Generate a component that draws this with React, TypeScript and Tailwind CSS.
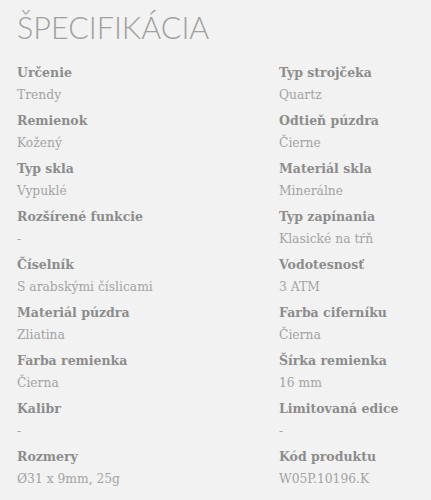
import React from "react";

const left: [string, string][] = [
  ["Určenie", "Trendy"],
  ["Remienok", "Kožený"],
  ["Typ skla", "Vypuklé"],
  ["Rozšírené funkcie", "-"],
  ["Číselník", "S arabskými číslicami"],
  ["Materiál púzdra", "Zliatina"],
  ["Farba remienka", "Čierna"],
  ["Kalibr", "-"],
  ["Rozmery", "Ø31 x 9mm, 25g"],
];
const right: [string, string][] = [
  ["Typ strojčeka", "Quartz"],
  ["Odtieň púzdra", "Čierne"],
  ["Materiál skla", "Minerálne"],
  ["Typ zapínania", "Klasické na tŕň"],
  ["Vodotesnosť", "3 ATM"],
  ["Farba ciferníku", "Čierna"],
  ["Šírka remienka", "16 mm"],
  ["Limitovaná edice", "-"],
  ["Kód produktu", "W05P.10196.K"],
];

function Item({ k, v }: { k: string; v: string }) {
  return (
    <div className="h-[48px] pt-[1px]">
      <div className="text-[12.5px] font-bold leading-[20px] text-[#8c8c8c]">{k}</div>
      <div className="mt-[1px] text-[12.3px] leading-[22px] text-[#a3a3a3]">{v}</div>
    </div>
  );
}

export default function App() {
  return (
    <div
      className="w-[431px] h-[500px] bg-[#f2f2f2] px-[17px] pt-[9px]"
      style={{ fontFamily: '"DejaVu Serif", serif' }}
    >
      <h1
        className="text-[30.5px] leading-[36px] text-[#a0a0a0]"
        style={{ fontFamily: 'Lato, "Open Sans", sans-serif', fontWeight: 300 }}
      >
        ŠPECIFIKÁCIA
      </h1>
      <div className="mt-[17px] grid grid-cols-[262px_1fr]">
        <div>
          {left.map(([k, v]) => (
            <Item key={k} k={k} v={v} />
          ))}
        </div>
        <div>
          {right.map(([k, v]) => (
            <Item key={k} k={k} v={v} />
          ))}
        </div>
      </div>
    </div>
  );
}
